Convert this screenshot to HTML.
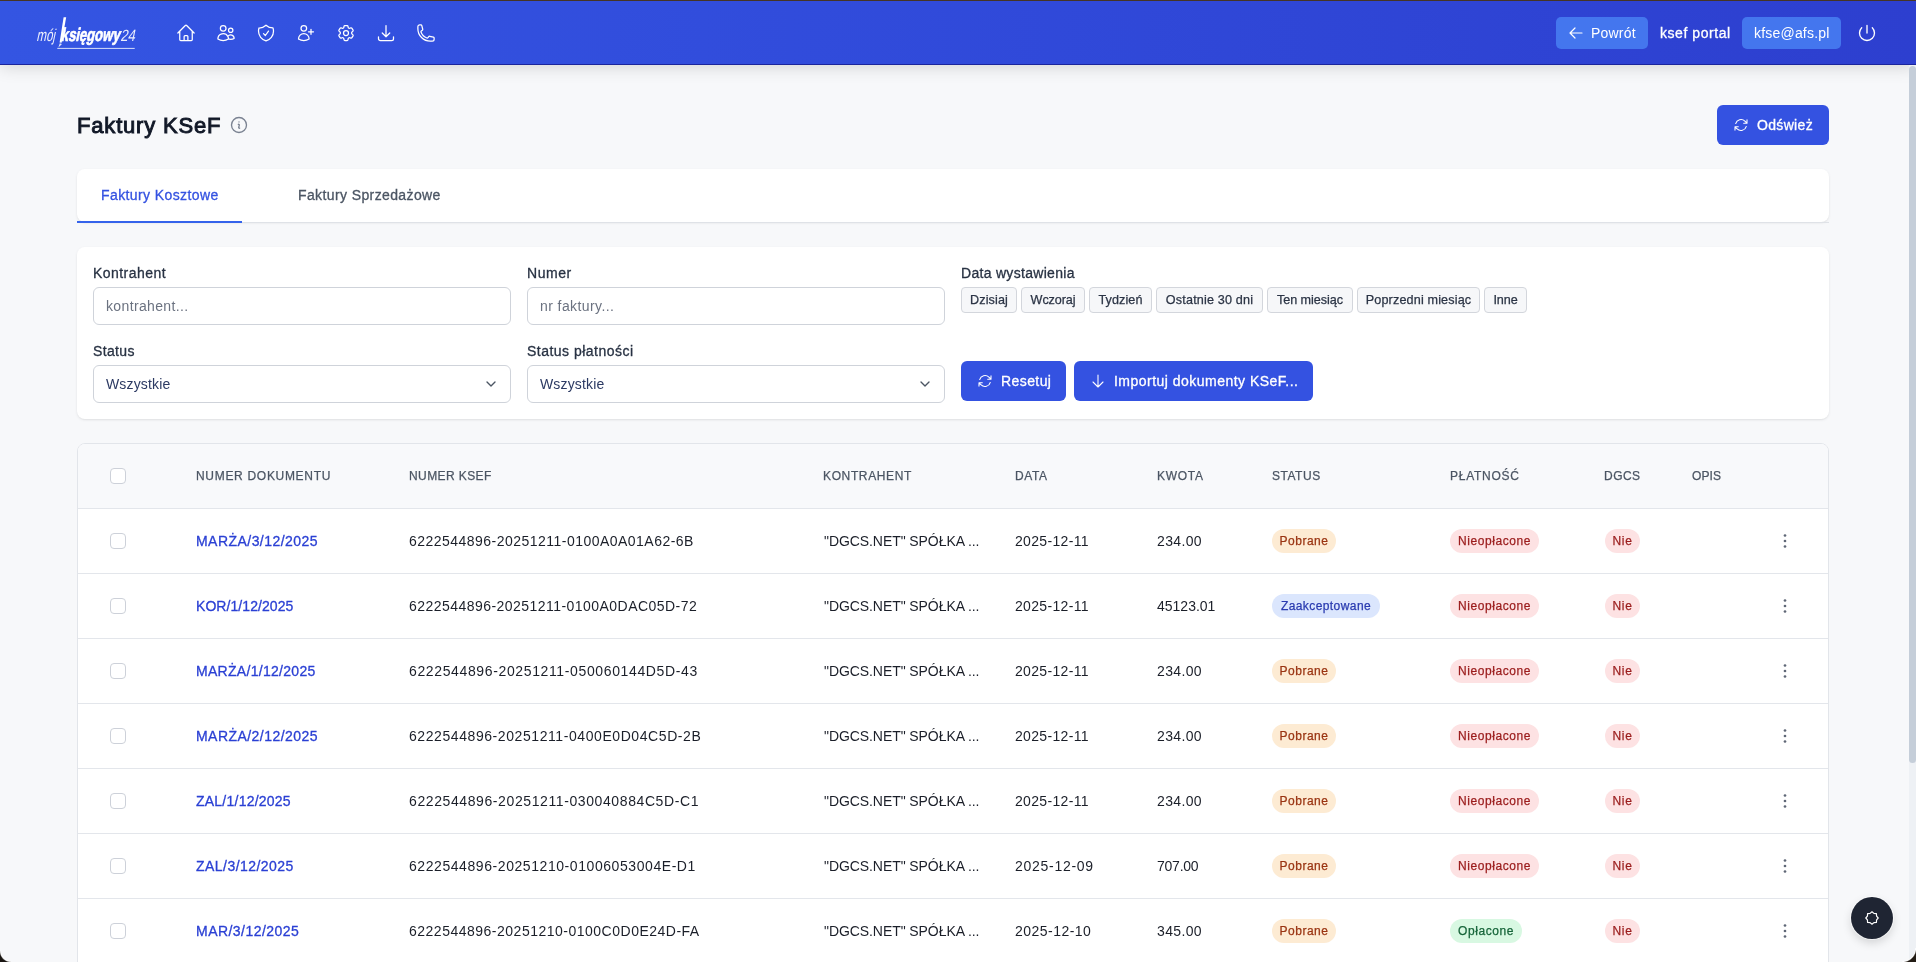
<!DOCTYPE html>
<html lang="pl">
<head>
<meta charset="utf-8">
<title>Faktury KSeF</title>
<style>
*{box-sizing:border-box;margin:0;padding:0}
html,body{width:1916px;height:962px;overflow:hidden}
body{font-family:"Liberation Sans",sans-serif;background:#f7f8fa;color:#111827;position:relative}
.abs{position:absolute}
span{white-space:nowrap}
svg{display:block}
.med{-webkit-text-stroke-width:0.3px}
.topline{left:0;top:0;width:1916px;height:1px;background:#4a3828}
.nav{left:0;top:1px;width:1916px;height:64px;background:linear-gradient(90deg,#3455e2 0%,#3049d9 55%,#2d3fcf 100%);border-bottom:1px solid #1b259c;box-shadow:0 2px 16px rgba(0,0,0,.15)}
.navicon{top:22px;width:20px;height:20px}
.navicon svg{width:20px;height:20px;fill:none;stroke:#fff;stroke-width:1.5}
.nbtn{top:16px;height:32px;background:#4476ee;border-radius:5px;color:#fff;font-size:14px}
.ntext{color:#fff;font-size:14px;line-height:16px;white-space:nowrap}
.sbtrack{left:1909px;top:65px;width:7px;height:897px;background:#eef1f5}
.sbthumb{left:1909px;top:65.5px;width:7px;height:697px;background:#c5ced9;border-radius:3.5px}
.title{left:77px;top:112.4px;font-size:22px;font-weight:normal;-webkit-text-stroke-width:0.95px;color:#111827;line-height:28px;white-space:nowrap}
.btn{background:#3452e1;color:#fff;border-radius:6px;font-size:14px}
.btn svg{fill:none;stroke:#fff;stroke-width:1.6}
.btxt{top:12px;line-height:16px;-webkit-text-stroke-width:0.3px;white-space:nowrap}
.card{background:#fff;border-radius:8px;box-shadow:0 1px 3px rgba(0,0,0,.08),0 1px 2px rgba(0,0,0,.04)}
.tab{top:18px;font-size:14px;line-height:16px;-webkit-text-stroke-width:0.3px;white-space:nowrap}
.lbl{font-size:14px;color:#283243;line-height:16px;-webkit-text-stroke-width:0.3px;white-space:nowrap}
.inp{height:38px;border:1px solid #cfd3da;border-radius:6px;background:#fff;font-size:14px}
.inp span{position:absolute;left:12px;top:10px;line-height:16px}
.pill{top:40px;height:26px;border:1px solid #d3d6dc;border-radius:4px;background:#f6f7f9;font-size:12.6px;color:#2b3445;-webkit-text-stroke-width:0.25px}
.pill span{position:absolute;left:0;right:0;top:4.7px;line-height:14px;text-align:center}
.tcard{left:77px;top:443px;width:1752px;height:540px;background:#fff;border:1px solid #e2e5ea;border-radius:8px;overflow:hidden}
.thead{left:0;top:0;width:1750px;height:65px;background:#f8f9fb;border-bottom:1px solid #e3e6eb}
.th{top:25px;font-size:12px;color:#4b5563;line-height:14px;-webkit-text-stroke-width:0.25px;white-space:nowrap}
.row{left:0;width:1750px;height:65px;border-bottom:1px solid #e3e6eb}
.td{top:24px;font-size:14px;color:#1b1f29;line-height:16px;white-space:nowrap}
.td.med{-webkit-text-stroke-width:0.3px}
.cb{width:16px;height:16px;border:1.5px solid #cdd1d9;border-radius:4px;background:#fff}
.badge{top:20px;height:24px;border-radius:12px;font-size:12px;-webkit-text-stroke-width:0.25px}
.badge span{position:absolute;left:0;right:0;top:5px;line-height:14px;text-align:center}
.b-or{background:#fdebd3;color:#9a3412}
.b-bl{background:#dbe6fd;color:#2a3bb0}
.b-rd{background:#fde2e3;color:#9b1c1c}
.b-gr{background:#d8f8e2;color:#17653a}
.kebab{top:24px;width:16px;height:16px}
.fab{left:1851px;top:897px;width:42px;height:42px;border-radius:21px;background:#1f2533;box-shadow:0 0 0 1px rgba(255,255,255,.6),0 4px 10px rgba(0,0,0,.15)}
.corner{width:14px;height:14px}
</style>
</head>
<body>
<div id="wrap" style="position:absolute;left:0;top:0;width:1916px;height:962px;will-change:transform">
<div class="abs topline"></div>
<div class="abs nav" id="nav">
  <svg class="abs" style="left:30px;top:9px" width="112" height="44" viewBox="30 10 112 44">
    <g transform="translate(36.3 40.9) skewX(-12)"><text x="0" y="0" textLength="18.6" lengthAdjust="spacingAndGlyphs" style="font:400 17px 'Liberation Sans';fill:#fff;opacity:.9">mój</text></g>
    <g transform="translate(60.6 40.9) skewX(-12)"><text x="0" y="0" textLength="59" lengthAdjust="spacingAndGlyphs" style="font:700 18.5px 'Liberation Sans';fill:#fff;stroke:#fff;stroke-width:.7">księgowy</text></g>
    <g transform="translate(120.3 40.9) skewX(-12)"><text x="0" y="0" textLength="14.6" lengthAdjust="spacingAndGlyphs" style="font:400 16.3px 'Liberation Sans';fill:#fff;opacity:.9">24</text></g>
    <path d="M63.6 17.2 L66.2 17.2 L61.6 42.8 L59.6 42.6 Z" fill="#fff"/>
    <path d="M59.8 43.2 L62 44 L58.4 47.6 Z" fill="#fff" opacity=".85"/>
    <rect x="57.3" y="47.9" width="77.4" height="1" fill="#fff" opacity=".8"/>
  </svg>
  <div class="abs navicon" style="left:175.5px"><svg viewBox="0 0 24 24"><path stroke-linecap="round" stroke-linejoin="round" d="m2.25 12 8.954-8.955c.44-.439 1.152-.439 1.591 0L21.75 12M4.5 9.75v10.125c0 .621.504 1.125 1.125 1.125H9.750v-4.875c0-.621.504-1.125 1.125-1.125h2.25c.621 0 1.125.504 1.125 1.125V21h4.125c.621 0 1.125-.504 1.125-1.125V9.75M8.25 21h8.25"/></svg></div>
  <div class="abs navicon" style="left:215.5px"><svg viewBox="0 0 24 24"><path stroke-linecap="round" stroke-linejoin="round" d="M15 19.128a9.38 9.38 0 0 0 2.625.372 9.337 9.337 0 0 0 4.121-.952 4.125 4.125 0 0 0-7.533-2.493M15 19.128v-.003c0-1.113-.285-2.16-.786-3.07M15 19.128v.106A12.318 12.318 0 0 1 8.624 21c-2.331 0-4.512-.645-6.374-1.766l-.001-.109a6.375 6.375 0 0 1 11.964-3.070M12 6.375a3.375 3.375 0 1 1-6.75 0 3.375 3.375 0 0 1 6.75 0Zm8.25 2.25a2.625 2.625 0 1 1-5.25 0 2.625 2.625 0 0 1 5.250 0Z"/></svg></div>
  <div class="abs navicon" style="left:255.5px"><svg viewBox="0 0 24 24"><path stroke-linecap="round" stroke-linejoin="round" d="M9 12.75 11.25 15 15 9.75m-3-7.036A11.959 11.959 0 0 1 3.598 6 11.99 11.99 0 0 0 3 9.749c0 5.592 3.824 10.29 9 11.623 5.176-1.332 9-6.030 9-11.622 0-1.310-.21-2.571-.598-3.751h-.152c-3.196 0-6.1-1.248-8.250-3.285Z"/></svg></div>
  <div class="abs navicon" style="left:295.5px"><svg viewBox="0 0 24 24"><path stroke-linecap="round" stroke-linejoin="round" d="M18 7.5v3m0 0v3m0-3h3m-3 0h-3m-2.25-4.125a3.375 3.375 0 1 1-6.75 0 3.375 3.375 0 0 1 6.75 0ZM3 19.235v-.11a6.375 6.375 0 0 1 12.75 0v.109A12.318 12.318 0 0 1 9.374 21c-2.331 0-4.512-.645-6.374-1.766Z"/></svg></div>
  <div class="abs navicon" style="left:335.5px"><svg viewBox="0 0 24 24"><path stroke-linecap="round" stroke-linejoin="round" d="M9.594 3.94c.09-.542.56-.94 1.11-.94h2.593c.55 0 1.02.398 1.11.94l.213 1.281c.063.374.313.686.645.87.074.04.147.083.22.127.325.196.72.257 1.075.124l1.217-.456a1.125 1.125 0 0 1 1.37.49l1.296 2.247a1.125 1.125 0 0 1-.26 1.431l-1.003.827c-.293.241-.438.613-.43.992a7.723 7.723 0 0 1 0 .255c-.008.378.137.75.43.991l1.004.827c.424.35.534.955.26 1.43l-1.298 2.247a1.125 1.125 0 0 1-1.369.491l-1.217-.456c-.355-.133-.75-.072-1.076.124a6.47 6.470 0 0 1-.22.128c-.331.183-.581.495-.644.869l-.213 1.281c-.09.543-.56.94-1.11.94h-2.594c-.55 0-1.019-.398-1.11-.94l-.213-1.281c-.062-.374-.312-.686-.644-.87a6.52 6.52 0 0 1-.22-.127c-.325-.196-.72-.257-1.076-.124l-1.217.456a1.125 1.125 0 0 1-1.369-.49l-1.297-2.247a1.125 1.125 0 0 1 .26-1.431l1.004-.827c.292-.24.437-.613.43-.991a6.932 6.932 0 0 1 0-.255c.007-.38-.138-.751-.43-.992l-1.004-.827a1.125 1.125 0 0 1-.26-1.43l1.297-2.247a1.125 1.125 0 0 1 1.37-.491l1.216.456c.356.133.751.072 1.076-.124.072-.044.146-.086.22-.128.332-.183.582-.495.644-.869l.214-1.28Z"/><path stroke-linecap="round" stroke-linejoin="round" d="M15 12a3 3 0 1 1-6 0 3 3 0 0 1 6 0Z"/></svg></div>
  <div class="abs navicon" style="left:375.5px"><svg viewBox="0 0 24 24"><path stroke-linecap="round" stroke-linejoin="round" d="M3 16.5v2.25A2.25 2.25 0 0 0 5.25 21h13.5A2.25 2.25 0 0 0 21 18.75V16.5M16.5 12 12 16.5m0 0L7.5 12m4.5 4.5V3"/></svg></div>
  <div class="abs navicon" style="left:415.5px"><svg viewBox="0 0 24 24"><path stroke-linecap="round" stroke-linejoin="round" d="M2.25 6.75c0 8.284 6.716 15 15 15h2.25a2.25 2.25 0 0 0 2.25-2.25v-1.372c0-.516-.351-.966-.852-1.091l-4.423-1.106c-.44-.11-.902.055-1.173.417l-.97 1.293c-.282.376-.769.542-1.21.38a12.035 12.035 0 0 1-7.143-7.143c-.162-.441.004-.928.38-1.21l1.293-.97c.363-.271.527-.734.417-1.173L6.963 3.102a1.125 1.125 0 0 0-1.091-.852H4.5A2.25 2.25 0 0 0 2.25 4.5v2.25Z"/></svg></div>

  <div class="abs nbtn" style="left:1556px;width:92px">
    <svg class="abs" style="left:12px;top:8px" width="16" height="16" viewBox="0 0 24 24" fill="none" stroke="#fff" stroke-width="1.8"><path stroke-linecap="round" stroke-linejoin="round" d="M10.5 19.5 3 12m0 0 7.5-7.5M3 12h18"/></svg>
    <span class="abs" style="left:35px;top:8px;line-height:16px;letter-spacing:0.200px">Powrót</span>
  </div>
  <div class="abs ntext" style="left:1660px;top:24px;-webkit-text-stroke-width:0.3px;letter-spacing:0.560px">ksef portal</div>
  <div class="abs nbtn" style="left:1742px;width:99px">
    <span class="abs" style="left:12px;top:8px;line-height:16px;letter-spacing:0.200px">kfse@afs.pl</span>
  </div>
  <svg class="abs" style="left:1857px;top:22px" width="20" height="20" viewBox="0 0 24 24" fill="none" stroke="#fff" stroke-width="1.6"><path stroke-linecap="round" stroke-linejoin="round" d="M5.636 5.636a9 9 0 1 0 12.728 0M12 3v9"/></svg>
</div>
<div class="abs title" style="letter-spacing:0.818px">Faktury KSeF</div>
<svg class="abs" style="left:229.2px;top:115px" width="20" height="20" viewBox="0 0 24 24" fill="none" stroke="#7a8291" stroke-width="1.6"><path stroke-linecap="round" stroke-linejoin="round" d="m11.25 11.25.041-.02a.75.75 0 0 1 1.063.852l-.708 2.836a.75.75 0 0 0 1.063.853l.041-.021M21 12a9 9 0 1 1-18 0 9 9 0 0 1 18 0Zm-9-3.75h.008v.008H12V8.250Z"/></svg>
<div class="abs btn" style="left:1717px;top:105px;width:112px;height:40px">
  <svg class="abs" style="left:16px;top:12px" width="16" height="16" viewBox="0 0 24 24"><path stroke-linecap="round" stroke-linejoin="round" d="M16.023 9.348h4.992v-.001M2.985 19.644v-4.992m0 0h4.992m-4.993 0 3.181 3.183a8.25 8.25 0 0 0 13.803-3.7M4.031 9.865a8.25 8.25 0 0 1 13.803-3.7l3.181 3.182m0-4.991v4.99"/></svg>
  <span class="abs btxt" style="left:40px;letter-spacing:0.333px">Odśwież</span>
</div>

<div class="abs card" style="left:77px;top:169px;width:1752px;height:53px;border-radius:8px">
  <div class="abs tab" style="left:24px;color:#3452e1;letter-spacing:0.400px">Faktury Kosztowe</div>
  <div class="abs tab" style="left:221px;color:#4b5563;letter-spacing:0.389px">Faktury Sprzedażowe</div>
</div>
<div class="abs" style="left:77px;top:221.5px;width:1752px;height:1.5px;background:#dfe2e7"></div>
<div class="abs" style="left:77px;top:221px;width:165px;height:2px;background:#3563eb"></div>

<div class="abs card" style="left:77px;top:247px;width:1752px;height:172px">
  <div class="abs lbl" style="left:16px;top:18px;letter-spacing:0.456px">Kontrahent</div>
  <div class="abs inp" style="left:16px;top:40px;width:418px;color:#6b7280"><span style="letter-spacing:0.358px">kontrahent...</span></div>
  <div class="abs lbl" style="left:450px;top:18px;letter-spacing:0.525px">Numer</div>
  <div class="abs inp" style="left:450px;top:40px;width:418px;color:#6b7280"><span style="letter-spacing:0.417px">nr faktury...</span></div>
  <div class="abs lbl" style="left:884px;top:18px;letter-spacing:0.300px">Data wystawienia</div>
  <div class="abs pill" style="left:884px;width:56px"><span style="letter-spacing:0.133px">Dzisiaj</span></div>
  <div class="abs pill" style="left:944px;width:64px"><span style="letter-spacing:-0.100px">Wczoraj</span></div>
  <div class="abs pill" style="left:1012px;width:63px"><span style="letter-spacing:0.083px">Tydzień</span></div>
  <div class="abs pill" style="left:1079px;width:107px"><span style="letter-spacing:0.171px">Ostatnie 30 dni</span></div>
  <div class="abs pill" style="left:1190px;width:86px"><span style="letter-spacing:-0.040px">Ten miesiąc</span></div>
  <div class="abs pill" style="left:1280px;width:123px"><span style="letter-spacing:0.156px">Poprzedni miesiąc</span></div>
  <div class="abs pill" style="left:1407px;width:43px"><span style="letter-spacing:-0.100px">Inne</span></div>

  <div class="abs lbl" style="left:16px;top:96px;letter-spacing:0.360px">Status</div>
  <div class="abs inp" style="left:16px;top:118px;width:418px;color:#2c3a63"><span style="letter-spacing:0.150px">Wszystkie</span><svg class="abs" style="left:389.2px;top:10.2px" width="16" height="16" viewBox="0 0 24 24" fill="none" stroke="#4b5563" stroke-width="2"><path stroke-linecap="round" stroke-linejoin="round" d="m6 9 6 6 6-6"/></svg></div>
  <div class="abs lbl" style="left:450px;top:96px;letter-spacing:0.480px">Status płatności</div>
  <div class="abs inp" style="left:450px;top:118px;width:418px;color:#2c3a63"><span style="letter-spacing:0.150px">Wszystkie</span><svg class="abs" style="left:389.2px;top:10.2px" width="16" height="16" viewBox="0 0 24 24" fill="none" stroke="#4b5563" stroke-width="2"><path stroke-linecap="round" stroke-linejoin="round" d="m6 9 6 6 6-6"/></svg></div>

  <div class="abs btn" style="left:884px;top:114px;width:105px;height:40px">
    <svg class="abs" style="left:16px;top:12px" width="16" height="16" viewBox="0 0 24 24"><path stroke-linecap="round" stroke-linejoin="round" d="M16.023 9.348h4.992v-.001M2.985 19.644v-4.992m0 0h4.992m-4.993 0 3.181 3.183a8.25 8.25 0 0 0 13.803-3.7M4.031 9.865a8.25 8.25 0 0 1 13.803-3.7l3.181 3.182m0-4.991v4.99"/></svg>
    <span class="abs btxt" style="left:40px;letter-spacing:0.417px">Resetuj</span>
  </div>
  <div class="abs btn" style="left:997px;top:114px;width:239px;height:40px">
    <svg class="abs" style="left:16px;top:12px" width="16" height="16" viewBox="0 0 24 24"><path stroke-linecap="round" stroke-linejoin="round" d="M19.5 13.5 12 21m0 0-7.5-7.5M12 21V3"/></svg>
    <span class="abs btxt" style="left:40px;letter-spacing:0.480px">Importuj dokumenty KSeF...</span>
  </div>
</div>

<div class="abs tcard" id="tcard">
  <div class="abs thead">
    <div class="abs cb" style="left:32px;top:24px"></div>
    <div class="abs th" style="left:118px;letter-spacing:0.693px">NUMER DOKUMENTU</div>
    <div class="abs th" style="left:331px;letter-spacing:0.400px">NUMER KSEF</div>
    <div class="abs th" style="left:745px;letter-spacing:0.633px">KONTRAHENT</div>
    <div class="abs th" style="left:937px;letter-spacing:0.600px">DATA</div>
    <div class="abs th" style="left:1079px;letter-spacing:0.725px">KWOTA</div>
    <div class="abs th" style="left:1194px;letter-spacing:0.520px">STATUS</div>
    <div class="abs th" style="left:1372px;letter-spacing:0.729px">PŁATNOŚĆ</div>
    <div class="abs th" style="left:1526px;letter-spacing:0.467px">DGCS</div>
    <div class="abs th" style="left:1614px;letter-spacing:0.100px">OPIS</div>
  </div>
  <div class="abs row" style="top:65px">
    <div class="abs cb" style="left:32px;top:24px"></div>
    <div class="abs td med" style="left:118px;color:#2b40d4;letter-spacing:0.457px">MARŻA/3/12/2025</div>
    <div class="abs td" style="left:331px;letter-spacing:0.474px">6222544896-20251211-0100A0A01A62-6B</div>
    <div class="abs td" style="left:746px;letter-spacing:-0.075px">"DGCS.NET" SPÓŁKA ...</div>
    <div class="abs td" style="left:937px;letter-spacing:0.333px">2025-12-11</div>
    <div class="abs td" style="left:1079px;letter-spacing:0.360px">234.00</div>
    <div class="abs badge b-or" style="left:1194px;width:64px"><span style="letter-spacing:0.483px">Pobrane</span></div>
    <div class="abs badge b-rd" style="left:1372px;width:89px"><span style="letter-spacing:0.590px">Nieopłacone</span></div>
    <div class="abs badge b-rd" style="left:1527px;width:35px"><span style="letter-spacing:0.700px">Nie</span></div>
    <svg class="abs kebab" style="left:1698.6px" viewBox="0 0 16 16" fill="#5f6776"><circle cx="8" cy="2.5" r="1.35"/><circle cx="8" cy="8" r="1.35"/><circle cx="8" cy="13.5" r="1.35"/></svg>
  </div>
  <div class="abs row" style="top:130px">
    <div class="abs cb" style="left:32px;top:24px"></div>
    <div class="abs td med" style="left:118px;color:#2b40d4;letter-spacing:0.067px">KOR/1/12/2025</div>
    <div class="abs td" style="left:331px;letter-spacing:0.456px">6222544896-20251211-0100A0DAC05D-72</div>
    <div class="abs td" style="left:746px;letter-spacing:-0.075px">"DGCS.NET" SPÓŁKA ...</div>
    <div class="abs td" style="left:937px;letter-spacing:0.333px">2025-12-11</div>
    <div class="abs td" style="left:1079px;letter-spacing:0.000px">45123.01</div>
    <div class="abs badge b-bl" style="left:1194px;width:108px"><span style="letter-spacing:0.417px">Zaakceptowane</span></div>
    <div class="abs badge b-rd" style="left:1372px;width:89px"><span style="letter-spacing:0.590px">Nieopłacone</span></div>
    <div class="abs badge b-rd" style="left:1527px;width:35px"><span style="letter-spacing:0.700px">Nie</span></div>
    <svg class="abs kebab" style="left:1698.6px" viewBox="0 0 16 16" fill="#5f6776"><circle cx="8" cy="2.5" r="1.35"/><circle cx="8" cy="8" r="1.35"/><circle cx="8" cy="13.5" r="1.35"/></svg>
  </div>
  <div class="abs row" style="top:195px">
    <div class="abs cb" style="left:32px;top:24px"></div>
    <div class="abs td med" style="left:118px;color:#2b40d4;letter-spacing:0.293px">MARŻA/1/12/2025</div>
    <div class="abs td" style="left:331px;letter-spacing:0.632px">6222544896-20251211-050060144D5D-43</div>
    <div class="abs td" style="left:746px;letter-spacing:-0.075px">"DGCS.NET" SPÓŁKA ...</div>
    <div class="abs td" style="left:937px;letter-spacing:0.333px">2025-12-11</div>
    <div class="abs td" style="left:1079px;letter-spacing:0.360px">234.00</div>
    <div class="abs badge b-or" style="left:1194px;width:64px"><span style="letter-spacing:0.483px">Pobrane</span></div>
    <div class="abs badge b-rd" style="left:1372px;width:89px"><span style="letter-spacing:0.590px">Nieopłacone</span></div>
    <div class="abs badge b-rd" style="left:1527px;width:35px"><span style="letter-spacing:0.700px">Nie</span></div>
    <svg class="abs kebab" style="left:1698.6px" viewBox="0 0 16 16" fill="#5f6776"><circle cx="8" cy="2.5" r="1.35"/><circle cx="8" cy="8" r="1.35"/><circle cx="8" cy="13.5" r="1.35"/></svg>
  </div>
  <div class="abs row" style="top:260px">
    <div class="abs cb" style="left:32px;top:24px"></div>
    <div class="abs td med" style="left:118px;color:#2b40d4;letter-spacing:0.450px">MARŻA/2/12/2025</div>
    <div class="abs td" style="left:331px;letter-spacing:0.576px">6222544896-20251211-0400E0D04C5D-2B</div>
    <div class="abs td" style="left:746px;letter-spacing:-0.075px">"DGCS.NET" SPÓŁKA ...</div>
    <div class="abs td" style="left:937px;letter-spacing:0.333px">2025-12-11</div>
    <div class="abs td" style="left:1079px;letter-spacing:0.360px">234.00</div>
    <div class="abs badge b-or" style="left:1194px;width:64px"><span style="letter-spacing:0.483px">Pobrane</span></div>
    <div class="abs badge b-rd" style="left:1372px;width:89px"><span style="letter-spacing:0.590px">Nieopłacone</span></div>
    <div class="abs badge b-rd" style="left:1527px;width:35px"><span style="letter-spacing:0.700px">Nie</span></div>
    <svg class="abs kebab" style="left:1698.6px" viewBox="0 0 16 16" fill="#5f6776"><circle cx="8" cy="2.5" r="1.35"/><circle cx="8" cy="8" r="1.35"/><circle cx="8" cy="13.5" r="1.35"/></svg>
  </div>
  <div class="abs row" style="top:325px">
    <div class="abs cb" style="left:32px;top:24px"></div>
    <div class="abs td med" style="left:118px;color:#2b40d4;letter-spacing:0.233px">ZAL/1/12/2025</div>
    <div class="abs td" style="left:331px;letter-spacing:0.600px">6222544896-20251211-030040884C5D-C1</div>
    <div class="abs td" style="left:746px;letter-spacing:-0.075px">"DGCS.NET" SPÓŁKA ...</div>
    <div class="abs td" style="left:937px;letter-spacing:0.333px">2025-12-11</div>
    <div class="abs td" style="left:1079px;letter-spacing:0.360px">234.00</div>
    <div class="abs badge b-or" style="left:1194px;width:64px"><span style="letter-spacing:0.483px">Pobrane</span></div>
    <div class="abs badge b-rd" style="left:1372px;width:89px"><span style="letter-spacing:0.590px">Nieopłacone</span></div>
    <div class="abs badge b-rd" style="left:1527px;width:35px"><span style="letter-spacing:0.700px">Nie</span></div>
    <svg class="abs kebab" style="left:1698.6px" viewBox="0 0 16 16" fill="#5f6776"><circle cx="8" cy="2.5" r="1.35"/><circle cx="8" cy="8" r="1.35"/><circle cx="8" cy="13.5" r="1.35"/></svg>
  </div>
  <div class="abs row" style="top:390px">
    <div class="abs cb" style="left:32px;top:24px"></div>
    <div class="abs td med" style="left:118px;color:#2b40d4;letter-spacing:0.458px">ZAL/3/12/2025</div>
    <div class="abs td" style="left:331px;letter-spacing:0.568px">6222544896-20251210-01006053004E-D1</div>
    <div class="abs td" style="left:746px;letter-spacing:-0.075px">"DGCS.NET" SPÓŁKA ...</div>
    <div class="abs td" style="left:937px;letter-spacing:0.722px">2025-12-09</div>
    <div class="abs td" style="left:1079px;letter-spacing:-0.240px">707.00</div>
    <div class="abs badge b-or" style="left:1194px;width:64px"><span style="letter-spacing:0.483px">Pobrane</span></div>
    <div class="abs badge b-rd" style="left:1372px;width:89px"><span style="letter-spacing:0.590px">Nieopłacone</span></div>
    <div class="abs badge b-rd" style="left:1527px;width:35px"><span style="letter-spacing:0.700px">Nie</span></div>
    <svg class="abs kebab" style="left:1698.6px" viewBox="0 0 16 16" fill="#5f6776"><circle cx="8" cy="2.5" r="1.35"/><circle cx="8" cy="8" r="1.35"/><circle cx="8" cy="13.5" r="1.35"/></svg>
  </div>
  <div class="abs row" style="top:455px">
    <div class="abs cb" style="left:32px;top:24px"></div>
    <div class="abs td med" style="left:118px;color:#2b40d4;letter-spacing:0.467px">MAR/3/12/2025</div>
    <div class="abs td" style="left:331px;letter-spacing:0.500px">6222544896-20251210-0100C0D0E24D-FA</div>
    <div class="abs td" style="left:746px;letter-spacing:-0.075px">"DGCS.NET" SPÓŁKA ...</div>
    <div class="abs td" style="left:937px;letter-spacing:0.467px">2025-12-10</div>
    <div class="abs td" style="left:1079px;letter-spacing:0.360px">345.00</div>
    <div class="abs badge b-or" style="left:1194px;width:64px"><span style="letter-spacing:0.483px">Pobrane</span></div>
    <div class="abs badge b-gr" style="left:1372px;width:72px"><span style="letter-spacing:0.571px">Opłacone</span></div>
    <div class="abs badge b-rd" style="left:1527px;width:35px"><span style="letter-spacing:0.700px">Nie</span></div>
    <svg class="abs kebab" style="left:1698.6px" viewBox="0 0 16 16" fill="#5f6776"><circle cx="8" cy="2.5" r="1.35"/><circle cx="8" cy="8" r="1.35"/><circle cx="8" cy="13.5" r="1.35"/></svg>
  </div>
</div>

<div class="abs fab">
  <svg class="abs" style="left:14px;top:14px" width="14" height="14" viewBox="0 0 14 14" fill="none" stroke="#fff" stroke-width="1.2" stroke-linejoin="round"><path d="M7 .8 L8.9 2.4 L11.4 2.6 L11.6 5.1 L13.2 7 L11.6 8.9 L11.4 11.4 L8.9 11.6 L7 13.2 L5.1 11.6 L2.6 11.4 L2.4 8.9 L.8 7 L2.4 5.1 L2.6 2.6 L5.1 2.4 Z"/></svg>
</div>
<div class="abs sbtrack"></div>
<div class="abs sbthumb"></div>
<div class="abs corner" style="left:0;top:951px;width:11px;height:11px;background:radial-gradient(circle at 11px 0,transparent 9.6px,rgba(255,255,255,.9) 10.4px,#1a1612 11.6px)"></div>
<div class="abs corner" style="left:1902px;top:948px;width:14px;height:14px;background:radial-gradient(circle at 0 0,transparent 12.8px,rgba(255,255,255,.9) 13.6px,#231c15 14.8px)"></div>
</div>
</body>
</html>
